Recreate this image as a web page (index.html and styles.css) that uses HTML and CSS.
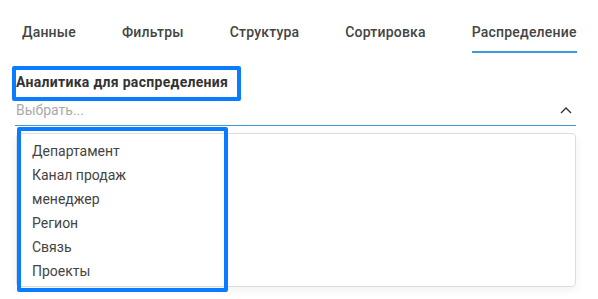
FILE: index.html
```html
<!DOCTYPE html>
<html lang="ru">
<head>
    <meta charset="UTF-8">
    <meta name="viewport" content="width=device-width, initial-scale=1.0">
    <title>Распределение</title>
    <link rel="stylesheet" href="styles.css">
</head>
<body>
    <div class="panel">
        <!-- Tabs -->
        <nav class="tabs">
            <a class="tab">Данные</a>
            <a class="tab">Фильтры</a>
            <a class="tab">Структура</a>
            <a class="tab">Сортировка</a>
            <a class="tab active">Распределение</a>
        </nav>

        <!-- Analytics select -->
        <div class="field">
            <div class="field-label">Аналитика для распределения</div>
            <div class="select">
                <span class="placeholder">Выбрать...</span>
                <svg class="chevron" width="12" height="7" viewBox="0 0 12 7">
                    <polyline points="1,6 6,1 11,6" fill="none" stroke="#333" stroke-width="1.4"/>
                </svg>
            </div>
            <ul class="menu">
                <li>Департамент</li>
                <li>Канал продаж</li>
                <li>менеджер</li>
                <li>Регион</li>
                <li>Связь</li>
                <li>Проекты</li>
            </ul>
        </div>

        <!-- Annotation frames -->
        <div class="mark mark-label"></div>
        <div class="mark mark-menu"></div>
    </div>
</body>
</html>
```

FILE: styles.css
```css
/* Basic Reset */
* {
    box-sizing: border-box;
    margin: 0;
    padding: 0;
}

body {
    font-family: Roboto, "Noto Sans", Arial, sans-serif;
    background-color: #fff;
    color: #444;
    font-size: 14px;
}

.panel {
    position: relative;
    width: 598px;
    height: 299px;
    padding: 22px 22px 0 15px;
}

/* Tabs */
.tabs {
    display: flex;
    gap: 46px;
    padding-left: 7px;
}

.tab {
    line-height: 20px;
    padding-bottom: 9px;
    border-bottom: 2px solid transparent;
    color: #444;
    font-weight: 500;
    letter-spacing: 0.2px;
}

.tab.active {
    border-bottom-color: #3d9bd6;
}

/* Field */
.field {
    margin-top: 19px;
}

.field-label {
    padding-left: 1px;
    line-height: 20px;
    font-weight: 700;
    color: #333;
    letter-spacing: 0.3px;
}

.select {
    display: flex;
    align-items: center;
    justify-content: space-between;
    height: 26px;
    margin-top: 8px;
    padding: 0 4px 5px 1px;
    border-bottom: 1px solid #3d9bd6;
}

.placeholder {
    line-height: 20px;
    color: #aaa;
}

.chevron {
    display: block;
}

.menu {
    list-style: none;
    margin: 7px 0 0 1px;
    padding: 5px 15px 3px;
    border: 1px solid #ddd;
    border-radius: 4px;
    box-shadow: 0 3px 8px rgba(0, 0, 0, 0.06);
}

.menu li {
    line-height: 24px;
    color: #444;
}

/* Highlight frames */
.mark {
    position: absolute;
    border: 4px solid #0a7cff;
    border-radius: 2px;
}

.mark-label {
    left: 12px;
    top: 66px;
    width: 229px;
    height: 35px;
}

.mark-menu {
    left: 17px;
    top: 127px;
    width: 211px;
    height: 165px;
}
```
